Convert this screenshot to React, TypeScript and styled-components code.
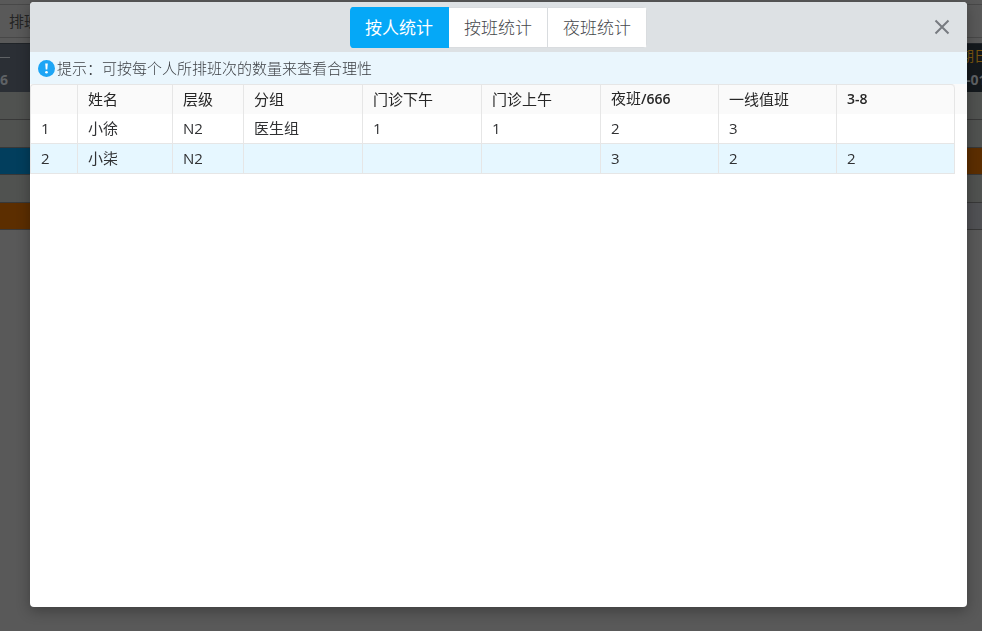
import React, { useState } from "react";
import styled, { createGlobalStyle } from "styled-components";

const GlobalStyle = createGlobalStyle`
  * { box-sizing: border-box; }
  body {
    margin: 0;
    background: #595959;
    font-family: "Open Sans", "Noto Sans CJK SC", sans-serif;
    font-size: 15px;
    color: #303133;
  }
`;

const Page = styled.div`
  min-height: 100vh;
  overflow: hidden;
`;

const Toolbar = styled.div`
  height: 34px;
  margin-top: 4px;
  padding-left: 9px;
  border-top: 1px solid #484848;
  border-bottom: 1px solid #484848;
  line-height: 32px;
  font-size: 15px;
  color: #242424;
`;

const ScheduleHead = styled.div`
  display: flex;
  justify-content: space-between;
  height: 49px;
  margin-top: 5px;
  border-top: 1px solid #202428;
  background: linear-gradient(to right, #2b2f35 50%, #14191d 50%);
  font-size: 14px;
  line-height: 24px;
  white-space: nowrap;
`;

const HeadCell = styled.div<{ $end?: boolean }>`
  width: ${(p) => (p.$end ? "22px" : "30px")};
`;

const HeadLine = styled.div<{ $gold?: boolean; $inset?: boolean }>`
  height: 24px;
  padding-left: ${(p) => (p.$inset ? "6px" : "0")};
  font-weight: ${(p) => (p.$gold ? 400 : 700)};
  color: ${(p) => (p.$gold ? "#7a5510" : "#5f6265")};
`;

const Dash = styled.div`
  width: 10px;
  height: 14px;
  margin-bottom: 10px;
  border-bottom: 1px solid #5f6265;
`;

const ScheduleRow = styled.div<{ $size: number }>`
  display: flex;
  height: ${(p) => p.$size}px;
  border-bottom: 1px solid #383838;
`;

const Shift = styled.div<{ $color: string }>`
  flex: 1;
  background: ${(p) => p.$color};
`;

const Overlay = styled.div`
  position: fixed;
  inset: 0;
  display: flex;
  padding: 2px 15px 24px 30px;
`;

const Dialog = styled.section`
  flex: 1;
  min-width: 0;
  overflow: hidden;
  border-radius: 4px;
  background: #fff;
  box-shadow: 0 4px 14px rgba(0, 0, 0, 0.3);
`;

const DialogHeader = styled.header`
  display: grid;
  grid-template-columns: 1fr auto 1fr;
  align-items: center;
  height: 50px;
  background: #dde1e4;
`;

const Tabs = styled.div`
  grid-column: 2;
  display: flex;
  overflow: hidden;
  border-radius: 4px;
`;

const Tab = styled.button<{ $active: boolean }>`
  height: 41px;
  padding: 0 15px 2px;
  border: 1px solid ${(p) => (p.$active ? "#05a8f7" : "#d9dcdf")};
  border-left-width: 0;
  background: ${(p) => (p.$active ? "#05a8f7" : "#fff")};
  color: ${(p) => (p.$active ? "#fff" : "#46484c")};
  font-family: inherit;
  font-size: 17px;
  font-weight: ${(p) => (p.$active ? 400 : 300)};
  cursor: pointer;
`;

const CloseButton = styled.button`
  justify-self: end;
  display: flex;
  margin-right: 17px;
  padding: 0;
  border: 0;
  background: none;
  cursor: pointer;
`;

const Tip = styled.div`
  display: flex;
  align-items: center;
  gap: 2px;
  height: 32px;
  padding-left: 8px;
  background: #eaf6fd;
  color: #3c3f43;
  font-weight: 300;
`;

const TipText = styled.span`
  padding-bottom: 2px;
`;

const TableArea = styled.div`
  padding-right: 12px;
  background: linear-gradient(#fafafa 30px, #fff 30px);
`;

const Table = styled.table`
  width: 100%;
  table-layout: fixed;
  border-collapse: separate;
  border-spacing: 0;
  border-top: 1px solid #e6e6e6;
  border-left: 1px solid #e6e6e6;
  border-radius: 4px 4px 0 0;
`;

const HeadData = styled.th`
  height: 29px;
  padding: 0 10px 2px;
  border-right: 1px solid #e6e6e6;
  text-align: left;
  line-height: 26px;
  font-weight: 400;
  color: #262626;

  &:last-child { border-top-right-radius: 4px; }
`;

const Latin = styled.span`
  font-size: 14px;
  font-weight: 600;
`;

const BodyRow = styled.tr<{ $hover: boolean }>`
  background: ${(p) => (p.$hover ? "#e6f7ff" : "#fff")};
`;

const Data = styled.td`
  height: 30px;
  padding: 0 10px 2px;
  border-right: 1px solid #e6e6e6;
  border-bottom: 1px solid #e6e6e6;
  line-height: 26px;
`;

const Column = styled.col<{ $width: number }>`
  width: ${(p) => (p.$width / 924) * 100}%;
`;

const tabs = ["按人统计", "按班统计", "夜班统计"];
const widths = [47, 95, 71, 119, 119, 119, 118, 118, 118];
const columns: React.ReactNode[] = [
  "", "姓名", "层级", "分组", "门诊下午", "门诊上午",
  <>夜班<Latin>/666</Latin></>, "一线值班", <Latin>3-8</Latin>,
];
const rows = [
  ["1", "小徐", "N2", "医生组", "1", "1", "2", "3", ""],
  ["2", "小柒", "N2", "", "", "", "3", "2", "2"],
];
const schedule = [
  { size: 28, left: "#505250", right: "#505250" },
  { size: 28, left: "#505250", right: "#505250" },
  { size: 27, left: "#023e5d", right: "#5c2e00" },
  { size: 28, left: "#505250", right: "#505250" },
  { size: 27, left: "#5c2e00", right: "#505154" },
];

export default function App() {
  const [active, setActive] = useState(0);
  return (
    <>
      <GlobalStyle />
      <Page aria-hidden="true">
        <Toolbar>排班</Toolbar>
        <ScheduleHead>
          <HeadCell>
            <Dash />
            <HeadLine>6</HeadLine>
          </HeadCell>
          <HeadCell $end>
            <HeadLine $gold>期日</HeadLine>
            <HeadLine $inset>-01</HeadLine>
          </HeadCell>
        </ScheduleHead>
        {schedule.map((row, i) => (
          <ScheduleRow key={i} $size={row.size}>
            <Shift $color={row.left} />
            <Shift $color={row.right} />
          </ScheduleRow>
        ))}
      </Page>
      <Overlay>
        <Dialog role="dialog" aria-label="统计">
          <DialogHeader>
            <Tabs role="tablist">
              {tabs.map((label, i) => (
                <Tab
                  key={label}
                  type="button"
                  role="tab"
                  aria-selected={active === i}
                  $active={active === i}
                  onClick={() => setActive(i)}
                >
                  {label}
                </Tab>
              ))}
            </Tabs>
            <CloseButton type="button" aria-label="关闭">
              <svg width="16" height="16" viewBox="0 0 16 16" fill="none" stroke="#777b80" strokeWidth="2">
                <path d="M1.5 1.5 14.5 14.5M14.5 1.5 1.5 14.5" />
              </svg>
            </CloseButton>
          </DialogHeader>
          <Tip>
            <svg width="17" height="17" viewBox="0 0 17 17" aria-hidden="true">
              <circle cx="8.5" cy="8.5" r="8.5" fill="#1da5f5" />
              <path d="M7.2 3.4h2.6l-.5 6.2H7.7z" fill="#fff" />
              <circle cx="8.5" cy="12.2" r="1.3" fill="#fff" />
            </svg>
            <TipText>提示：可按每个人所排班次的数量来查看合理性</TipText>
          </Tip>
          <TableArea>
            <Table>
              <colgroup>
                {widths.map((w, i) => <Column key={i} $width={w} />)}
              </colgroup>
              <thead>
                <tr>
                  {columns.map((c, i) => <HeadData key={i} scope="col">{c}</HeadData>)}
                </tr>
              </thead>
              <tbody>
                {rows.map((row, i) => (
                  <BodyRow key={row[0]} $hover={i === 1}>
                    {row.map((cell, j) => <Data key={j}>{cell}</Data>)}
                  </BodyRow>
                ))}
              </tbody>
            </Table>
          </TableArea>
        </Dialog>
      </Overlay>
    </>
  );
}
